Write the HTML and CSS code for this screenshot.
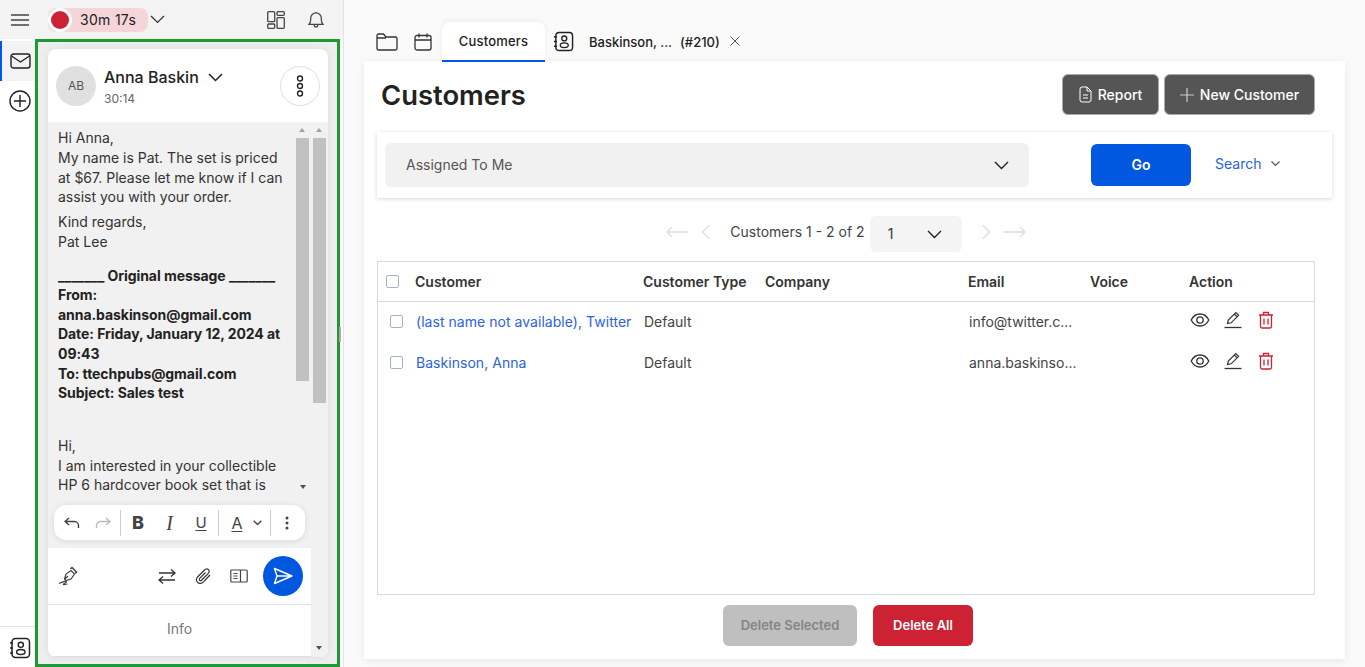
FILE: index.html
```html
<!DOCTYPE html>
<html lang="en">
  <head>
    <meta charset="UTF-8" />
    <meta name="viewport" content="width=device-width, initial-scale=1.0" />
    <title>Customers</title>
    <link rel="stylesheet" href="styles.css">
  </head>
  <body>
    <!-- shared icons -->
    <svg class="defs" width="0" height="0">
      <symbol id="i-book" viewBox="0 0 22 22">
        <rect x="3" y="1.5" width="17.5" height="19" rx="3.5" fill="none" stroke="currentColor" stroke-width="1.5"/>
        <path d="M1 6h3M1 11h3M1 16h3" stroke="currentColor" stroke-width="1.5"/>
        <circle cx="11.8" cy="7.8" r="2.6" fill="none" stroke="currentColor" stroke-width="1.4"/>
        <ellipse cx="11.8" cy="15" rx="4.2" ry="2.5" fill="none" stroke="currentColor" stroke-width="1.4"/>
      </symbol>
      <symbol id="i-eye" viewBox="0 0 20 16">
        <path d="M1.2 8C3.2 4 6.2 2 10 2s6.800 2 8.800 6c-2 4-5 6-8.800 6S3.200 12 1.200 8z" fill="none" stroke="currentColor" stroke-width="1.300"/>
        <circle cx="10" cy="8" r="3.200" fill="none" stroke="currentColor" stroke-width="1.300"/>
      </symbol>
      <symbol id="i-pen" viewBox="0 0 20 18">
        <path d="M4.500 12.500l.8-3.500 7.500-7.500 2.800 2.800-7.500 7.500-3.600.7zM11.300 3l2.800 2.800" fill="none" stroke="currentColor" stroke-width="1.200"/>
        <path d="M1.500 16.500h17" stroke="currentColor" stroke-width="1.300"/>
      </symbol>
      <symbol id="i-trash" viewBox="0 0 16 18">
        <path d="M1 4h14M5.500 4V1.500h5V4M2.500 4v11.500a1.500 1.500 0 0 0 1.500 1.500h8a1.500 1.500 0 0 0 1.500-1.500V4M6 7.500v6M10 7.500v6" fill="none" stroke="currentColor" stroke-width="1.300"/>
      </symbol>
    </svg>

    <div class="app">
      <!-- left panel -->
      <div class="left">
        <div class="topbar">
          <svg class="burger" width="18" height="12" viewBox="0 0 18 12"><path d="M0 1h18M0 6h18M0 11h18" stroke="#444" stroke-width="1.300"/></svg>
          <div class="timer">
            <span class="rec"><i></i></span>
            <span class="timer-text">30m 17s</span>
          </div>
          <svg class="timer-caret" width="15" height="9" viewBox="0 0 15 9"><path d="M1 1l6.500 6.500L14 1" fill="none" stroke="#333" stroke-width="1.200"/></svg>
          <svg class="layout-icon" width="18" height="18" viewBox="0 0 18 18"><g fill="none" stroke="#444" stroke-width="1.300"><rect x=".7" y=".7" width="7" height="10" rx="1"/><rect x=".7" y="13" width="7" height="4.300" rx="1"/><rect x="10" y=".7" width="7.300" height="3.600" rx="1"/><rect x="10" y="6.700" width="7.300" height="10.600" rx="1"/></g></svg>
          <svg class="bell-icon" width="16" height="18" viewBox="0 0 18 20"><path d="M1 15c1.500-1.500 2-2.500 2-5V8a6 6 0 0 1 12 0v2c0 2.500.5 3.500 2 5zM7 15.500c0 3 4 3 4 0M9 1v1" fill="none" stroke="#444" stroke-width="1.400"/></svg>
        </div>

        <div class="left-main">
          <div class="rail">
            <div class="rail-tab active">
              <svg width="21" height="16" viewBox="0 0 21 16"><rect x="1" y="1" width="19" height="14" rx="2.500" fill="none" stroke="#222" stroke-width="1.400"/><path d="M1.500 3l9 6 9-6" fill="none" stroke="#222" stroke-width="1.400"/></svg>
            </div>
            <div class="rail-tab">
              <svg width="22" height="22" viewBox="0 0 22 22"><circle cx="11" cy="11" r="10" fill="none" stroke="#222" stroke-width="1.400"/><path d="M11 5v12M5 11h12" stroke="#222" stroke-width="1.400"/></svg>
            </div>
            <div class="rail-foot">
              <svg width="22" height="22"><use href="#i-book"/></svg>
            </div>
          </div>

          <!-- conversation -->
          <div class="frame">
            <div class="card">
              <div class="card-head">
                <div class="avatar">AB</div>
                <div class="who">
                  <div class="who-name">Anna Baskin
                    <svg width="15" height="9" viewBox="0 0 15 9"><path d="M1 1l6.500 6.500L14 1" fill="none" stroke="#222" stroke-width="1.500"/></svg>
                  </div>
                  <div class="who-time">30:14</div>
                </div>
                <div class="more">
                  <svg width="8" height="24" viewBox="0 0 8 24"><g fill="none" stroke="#222" stroke-width="1.400"><circle cx="4" cy="4.500" r="2.500"/><circle cx="4" cy="12" r="2.500"/><circle cx="4" cy="19.500" r="2.500"/></g></svg>
                </div>
              </div>

              <div class="card-body">
                <div class="card-col">
                  <div class="message">
                    <div class="message-text">
                      <p>Hi Anna,<br>My name is Pat. The set is priced at $67. Please let me know if I can assist you with your order.</p>
                      <p class="kind">Kind regards,<br>Pat Lee</p>
                      <p class="orig"><b>_______ Original message _______<br>From:<br>anna.baskinson@gmail.com<br>Date: Friday, January 12, 2024 at 09:43<br>To: ttechpubs@gmail.com<br>Subject: Sales test</b></p>
                      <p class="hi">Hi,<br>I am interested in your collectible HP 6 hardcover book set that is</p>
                    </div>
                    <div class="scrollbar inner">
                      <span class="arrow-up"></span>
                      <div class="thumb"></div>
                      <span class="arrow-down"></span>
                    </div>
                  </div>

                  <div class="format-wrap">
                    <div class="format">
                      <svg class="f-undo" width="16" height="12" viewBox="0 0 16 12"><path d="M5 1L1 4.500 5 8M1 4.500h9a4.500 4 0 0 1 4.500 4V11" fill="none" stroke="#444" stroke-width="1.400"/></svg>
                      <svg class="f-redo" width="16" height="12" viewBox="0 0 16 12"><path d="M11 1l4 3.500L11 8M15 4.500H6a4.500 4 0 0 0-4.500 4V11" fill="none" stroke="#bbb" stroke-width="1.400"/></svg>
                      <span class="f-sep sep-a"></span>
                      <span class="f-btn f-b">B</span>
                      <span class="f-btn f-i">I</span>
                      <span class="f-btn f-u">U</span>
                      <span class="f-sep sep-b"></span>
                      <span class="f-btn f-a">A</span>
                      <svg class="f-caret" width="9" height="6" viewBox="0 0 9 6"><path d="M.7.700L4.500 4.500 8.300.700" fill="none" stroke="#444" stroke-width="1.300"/></svg>
                      <span class="f-sep sep-c"></span>
                      <svg class="f-dots" width="4" height="14" viewBox="0 0 4 14"><g fill="#444"><circle cx="2" cy="2" r="1.500"/><circle cx="2" cy="7" r="1.500"/><circle cx="2" cy="12" r="1.500"/></g></svg>
                    </div>
                  </div>

                  <div class="composer">
                    <svg class="c-sign" width="20" height="20" viewBox="0 0 20 20"><g fill="none" stroke="#444" stroke-width="1.200"><path d="M6.500 13l1.500-5 5-3.500 3.500 3.500-3.500 5-5 1.500zM6.500 13.500L10 10"/><path d="M12.500 3l1.500-1.500 4.500 4.500L17 7.500" stroke-width="1.500"/><path d="M1 17.500c3-1.500 7-3 7.500-2s-4 2.500-3 3 3-.5 4-.5"/></g></svg>
                    <svg class="c-swap" width="18" height="15" viewBox="0 0 18 15"><path d="M1 4h16M13 .500L17 4l-4 3.500M17 11H1M5 7.500L1 11l4 3.500" fill="none" stroke="#333" stroke-width="1.300"/></svg>
                    <svg class="c-clip" width="17" height="17" viewBox="0 0 17 17"><path d="M15 7l-6.500 6.800c-1.800 1.800-4.500 2-6 .5s-1.300-4 .5-5.800L9.500 2c1.200-1.200 3-1.400 4-.4s.8 2.800-.4 4L6.800 12c-.7.700-1.700.8-2.200.3s-.4-1.500.3-2.200L10.500 4.500" fill="none" stroke="#333" stroke-width="1.200"/></svg>
                    <svg class="c-book" width="18" height="14" viewBox="0 0 18 14"><g fill="none" stroke="#444" stroke-width="1.200"><rect x=".8" y="1" width="16.400" height="12" rx="1"/><path d="M10.500 1v12M3.500 4.500h4M3.500 7h4M3.500 9.500h4"/></g></svg>
                    <div class="send">
                      <svg width="20" height="18" viewBox="0 0 20 18"><path d="M1.500 1.500L19 9 1.500 16.500 4 9zM4 9h15" fill="none" stroke="#fff" stroke-width="1.400" stroke-linejoin="round"/></svg>
                    </div>
                  </div>
                  <div class="info">Info</div>
                </div>
                <div class="scrollbar outer">
                  <span class="arrow-up"></span>
                  <div class="thumb"></div>
                  <span class="arrow-down"></span>
                </div>
              </div>
            </div>
          </div>
        </div>
        <span class="handle"></span>
      </div>

      <!-- right panel -->
      <div class="right">
        <div class="tabs">
          <svg class="t-folder" width="22" height="18" viewBox="0 0 22 18"><path d="M1 15.500V2.500A1.500 1.500 0 0 1 2.500 1h5L10 4h9.500A1.500 1.500 0 0 1 21 5.500v10a1.500 1.500 0 0 1-1.500 1.500h-17A1.500 1.500 0 0 1 1 15.500zM1 5h9" fill="none" stroke="#333" stroke-width="1.300"/></svg>
          <svg class="t-cal" width="18" height="18" viewBox="0 0 18 18"><rect x="1" y="2.500" width="16" height="14.500" rx="2" fill="none" stroke="#333" stroke-width="1.300"/><path d="M1 7h16M5 .500v4M13 .500v4" stroke="#333" stroke-width="1.300"/></svg>
          <div class="tab active">Customers</div>
          <svg class="t-book" width="21" height="21"><use href="#i-book"/></svg>
          <div class="tab-name"><span>Baskinson, ...</span><span>(#210)</span></div>
          <svg class="t-close" width="10" height="10" viewBox="0 0 10 10"><path d="M.5.500l9 9M9.500.500l-9 9" stroke="#555" stroke-width="1"/></svg>
        </div>

        <div class="page">
          <div class="page-head">
            <h1>Customers</h1>
            <div class="page-actions">
              <button class="btn-dark btn-report">
                <svg width="13" height="17" viewBox="0 0 13 17"><path d="M1 3a2 2 0 0 1 2-2h5l4 4v9a2 2 0 0 1-2 2H3a2 2 0 0 1-2-2zM8 1v4h4M4 9h5M4 12h5" fill="none" stroke="#fff" stroke-width="1"/></svg>
                Report
              </button>
              <button class="btn-dark btn-new">
                <svg width="14" height="14" viewBox="0 0 14 14"><path d="M7 0v14M0 7h14" stroke="#ccc" stroke-width="1.200"/></svg>
                New Customer
              </button>
            </div>
          </div>

          <div class="filter">
            <div class="filter-select">
              <span>Assigned To Me</span>
              <svg width="15" height="9" viewBox="0 0 15 9"><path d="M1 1l6.500 6.500L14 1" fill="none" stroke="#222" stroke-width="1.400"/></svg>
            </div>
            <button class="btn-go">Go</button>
            <div class="search-link">Search
              <svg width="9" height="6" viewBox="0 0 9 6"><path d="M.5.500l4 4 4-4" fill="none" stroke="#555" stroke-width="1.200"/></svg>
            </div>
          </div>

          <div class="pager">
            <svg class="p-first" width="22" height="12" viewBox="0 0 22 12"><path d="M6 1L1 6l5 5M1 6h21" fill="none" stroke="#ddd" stroke-width="1.300"/></svg>
            <svg class="p-prev" width="9" height="14" viewBox="0 0 9 14"><path d="M8 .500L1.500 7 8 13.500" fill="none" stroke="#ddd" stroke-width="1.300"/></svg>
            <span class="p-text">Customers 1 - 2 of 2</span>
            <div class="p-select">
              <span>1</span>
              <svg width="15" height="9" viewBox="0 0 15 9"><path d="M1 1l6.500 6.500L14 1" fill="none" stroke="#222" stroke-width="1.400"/></svg>
            </div>
            <svg class="p-next" width="9" height="14" viewBox="0 0 9 14"><path d="M1 .500L7.500 7 1 13.500" fill="none" stroke="#ddd" stroke-width="1.300"/></svg>
            <svg class="p-last" width="22" height="12" viewBox="0 0 22 12"><path d="M16 1l5 5-5 5M21 6H0" fill="none" stroke="#ddd" stroke-width="1.300"/></svg>
          </div>

          <div class="table-box">
            <table class="grid">
              <colgroup>
                <col class="c1"><col class="c2"><col class="c3"><col class="c4"><col class="c5"><col class="c6"><col class="c7">
              </colgroup>
              <thead>
                <tr>
                  <th><span class="check head-check"></span></th>
                  <th>Customer</th>
                  <th>Customer Type</th>
                  <th>Company</th>
                  <th>Email</th>
                  <th>Voice</th>
                  <th>Action</th>
                </tr>
              </thead>
              <tbody>
                <tr>
                  <td><span class="check"></span></td>
                  <td><a>(last name not available), Twitter</a></td>
                  <td>Default</td>
                  <td></td>
                  <td>info@twitter.c...</td>
                  <td></td>
                  <td>
                    <div class="acts">
                      <svg class="a-eye" width="20" height="16"><use href="#i-eye"/></svg>
                      <svg class="a-pen" width="20" height="18"><use href="#i-pen"/></svg>
                      <svg class="a-trash" width="16" height="18"><use href="#i-trash"/></svg>
                    </div>
                  </td>
                </tr>
                <tr>
                  <td><span class="check"></span></td>
                  <td><a>Baskinson, Anna</a></td>
                  <td>Default</td>
                  <td></td>
                  <td>anna.baskinso...</td>
                  <td></td>
                  <td>
                    <div class="acts">
                      <svg class="a-eye" width="20" height="16"><use href="#i-eye"/></svg>
                      <svg class="a-pen" width="20" height="18"><use href="#i-pen"/></svg>
                      <svg class="a-trash" width="16" height="18"><use href="#i-trash"/></svg>
                    </div>
                  </td>
                </tr>
              </tbody>
            </table>
          </div>

          <div class="page-foot">
            <button class="btn-off">Delete Selected</button>
            <button class="btn-red">Delete All</button>
          </div>
        </div>
      </div>
    </div>
  </body>
</html>
```

FILE: styles.css
```css
/* reset */
* {
  margin: 0;
  padding: 0;
  box-sizing: border-box;
}

html,
body {
  height: 100%;
  overflow: hidden;
}

body {
  font-family: "Inter", "Liberation Sans", sans-serif;
  font-size: 14px;
  color: #333;
  background-color: #fafafa;
}

button {
  font-family: inherit;
  border: none;
}

.defs {
  position: absolute;
}

.app {
  display: flex;
  height: 667px;
}

/* left panel */
.left {
  position: relative;
  width: 344px;
  flex-shrink: 0;
  display: flex;
  flex-direction: column;
  background-color: #fff;
  border-right: 1px solid #e3e3e3;
}

.topbar {
  display: flex;
  align-items: center;
  height: 39px;
  flex-shrink: 0;
  background-color: #f3f3f3;
  padding-left: 11px;
}

.timer {
  display: flex;
  align-items: center;
  height: 24px;
  width: 100px;
  margin-left: 19px;
  background-color: #f6d5d9;
  border-radius: 8px;
}

.rec {
  display: flex;
  align-items: center;
  justify-content: center;
  width: 24px;
  height: 24px;
  border-radius: 50%;
  background-color: #fff;
}

.rec i {
  width: 18px;
  height: 18px;
  border-radius: 50%;
  background-color: #cc2233;
}

.timer-text {
  margin-left: 8px;
  font-size: 14px;
  letter-spacing: 0.3px;
  color: #222;
}

.timer-caret {
  margin-left: 2px;
}

.layout-icon {
  margin-left: 102px;
}

.bell-icon {
  margin-left: 23px;
}

.left-main {
  display: flex;
  flex: 1;
  min-height: 0;
}

.rail {
  width: 35px;
  flex-shrink: 0;
  display: flex;
  flex-direction: column;
  padding-top: 2px;
}

.rail-tab {
  display: flex;
  align-items: center;
  justify-content: center;
  height: 40px;
  padding-left: 4px;
}

.rail-tab.active {
  background-color: #f3f3f3;
  border-left: 2px solid #0057e0;
  padding-left: 3px;
}

.rail-foot {
  margin-top: auto;
  height: 41px;
  display: flex;
  justify-content: center;
  padding: 10px 0 0 5px;
  border-top: 1px solid #e3e3e3;
  color: #222;
}

/* conversation frame */
.frame {
  width: 305px;
  border: 3px solid #1f9a33;
  background-color: #eee;
  padding: 7px 9px 7px 10px;
}

.card {
  height: 100%;
  display: flex;
  flex-direction: column;
  background-color: #fff;
  border-radius: 8px;
  overflow: hidden;
  box-shadow: 0 0 8px rgba(0, 0, 0, 0.08);
}

.card-head {
  display: flex;
  align-items: center;
  height: 73px;
  flex-shrink: 0;
  padding: 0 8px;
}

.avatar {
  display: flex;
  align-items: center;
  justify-content: center;
  width: 40px;
  height: 40px;
  border-radius: 50%;
  background-color: #e0e0e0;
  color: #555;
  font-size: 12px;
}

.who {
  margin-left: 8px;
  flex: 1;
}

.who-name {
  font-size: 16px;
  font-weight: 500;
  line-height: 20px;
  color: #222;
  padding-top: 1px;
}

.who-name svg {
  margin-left: 5px;
  vertical-align: 1px;
}

.who-time {
  margin-top: 4px;
  font-size: 12px;
  color: #666;
}

.more {
  display: flex;
  align-items: center;
  justify-content: center;
  width: 40px;
  height: 40px;
  border-radius: 50%;
  border: 1px solid #e0e0e0;
}

.card-body {
  display: flex;
  flex: 1;
  min-height: 0;
}

.card-col {
  width: 263px;
  flex-shrink: 0;
  display: flex;
  flex-direction: column;
}

.message {
  display: flex;
  height: 383px;
  flex-shrink: 0;
  background-color: #f1f1f1;
  position: relative;
}

.message-text {
  width: 246px;
  padding: 6.4px 6px 0 10px;
  height: 372px;
  overflow: hidden;
  line-height: 19.6px;
  color: #333;
}

.kind {
  margin-top: 5.4px;
}

.orig {
  margin-top: 14.2px;
}

.hi {
  margin-top: 33.4px;
}

.orig b {
  font-weight: 700;
  letter-spacing: -0.06px;
  color: #222;
}

/* fake scrollbars, same look as the native ones */
.scrollbar {
  position: relative;
  width: 17px;
  flex-shrink: 0;
  background-color: #f1f1f1;
}

.thumb {
  position: absolute;
  left: 2px;
  top: 16px;
  width: 13px;
  background-color: #c1c1c1;
}

.inner .thumb {
  height: 243px;
}

.outer .thumb {
  height: 265px;
}

.arrow-up,
.arrow-down {
  position: absolute;
  left: 5px;
  width: 0;
  height: 0;
  border-left: 3.500px solid transparent;
  border-right: 3.500px solid transparent;
}

.arrow-up {
  top: 6px;
  border-bottom: 4px solid #a3a3a3;
}

.arrow-down {
  border-top: 4px solid #505050;
}

.inner .arrow-down {
  top: 363px;
  left: 6px;
}

.outer .arrow-down {
  bottom: 7px;
}

/* format toolbar */
.format-wrap {
  height: 45px;
  margin-top: -2px;
  position: relative;
  flex-shrink: 0;
  background-color: #f1f1f1;
  padding: 2px 0 0 6px;
}

.format {
  display: flex;
  align-items: center;
  width: 251px;
  height: 35px;
  background-color: #fff;
  border-radius: 12px;
  box-shadow: 0 1px 6px rgba(0, 0, 0, 0.1);
  padding-left: 10px;
  color: #444;
}

.f-redo {
  margin-left: 15px;
}

.f-sep {
  width: 1px;
  height: 26px;
  background-color: #ccc;
}

.sep-a {
  margin-left: 9px;
}

.sep-b {
  margin-left: 9px;
}

.sep-c {
  margin-left: 8px;
}

.f-btn {
  width: 16px;
  text-align: center;
  font-size: 16px;
  line-height: 20px;
}

.f-b {
  margin-left: 9px;
  font-weight: 800;
  font-size: 18px;
}

.f-i {
  margin-left: 15.5px;
  font-style: italic;
  font-family: "Liberation Serif", serif;
  font-size: 20px;
}

.f-u {
  margin-left: 15.5px;
  font-size: 15px;
  text-decoration: underline;
  text-underline-offset: 2px;
}

.f-a {
  margin-left: 10px;
  text-decoration: underline;
  text-underline-offset: 2px;
}

.f-caret {
  margin-left: 7.5px;
}

.f-dots {
  margin-left: 14px;
}

/* composer */
.composer {
  display: flex;
  align-items: center;
  height: 57px;
  flex-shrink: 0;
  background-color: #fff;
  border-bottom: 1px solid #dedede;
  padding: 0 8px 0 10px;
}

.c-swap {
  margin-left: 80px;
}

.c-clip {
  margin-left: 19px;
}

.c-book {
  margin-left: 18px;
}

.send {
  display: flex;
  align-items: center;
  justify-content: center;
  width: 40px;
  height: 40px;
  margin-left: 15px;
  border-radius: 50%;
  background-color: #0057e0;
}

.info {
  height: 52px;
  flex-shrink: 0;
  display: flex;
  align-items: center;
  justify-content: center;
  color: #777;
  font-size: 14px;
  padding-bottom: 4px;
  border-bottom: 1px solid #dedede;
}

.handle {
  position: absolute;
  left: 339px;
  top: 327px;
  width: 2px;
  height: 15px;
  background-color: #aaa;
}

/* right panel */
.right {
  flex: 1;
  min-width: 0;
  padding: 22px 20px 8px 20px;
  display: flex;
  flex-direction: column;
}

.tabs {
  display: flex;
  align-items: center;
  height: 39px;
  flex-shrink: 0;
  padding-left: 12px;
  color: #222;
}

.t-cal {
  margin-left: 16px;
}

.tab {
  position: relative;
  z-index: 1;
  height: 40px;
  width: 103px;
  margin-top: 1px;
  margin-left: 10px;
  display: flex;
  align-items: center;
  justify-content: center;
  background-color: #fff;
  border-radius: 8px 8px 0 0;
  border-bottom: 2px solid #0057e0;
  font-size: 13px;
  font-weight: 500;
  letter-spacing: 0.2px;
  box-shadow: 0 -2px 6px rgba(0, 0, 0, 0.05);
}

.t-book {
  margin-left: 8px;
}

.tab-name {
  display: flex;
  gap: 8px;
  margin-left: 15px;
  font-size: 13px;
  font-weight: 500;
}

.t-close {
  margin-left: 10px;
  margin-top: -2px;
}

.page {
  flex: 1;
  min-height: 0;
  background-color: #fff;
  box-shadow: 0 2px 8px rgba(0, 0, 0, 0.08);
  padding: 0 13px;
}

.page-head {
  display: flex;
  align-items: flex-start;
  justify-content: space-between;
  height: 71px;
  padding: 14px 17px 0 4px;
}

.page-head h1 {
  margin-top: 1px;
  font-size: 27.4px;
  font-weight: 600;
  line-height: 38px;
  color: #222;
}

.page-actions {
  display: flex;
  gap: 5px;
  margin-top: -1px;
}

.btn-dark {
  display: flex;
  align-items: center;
  justify-content: center;
  gap: 6px;
  height: 41px;
  background-color: #555;
  border: 1px solid #aaa;
  border-radius: 6px;
  color: #fff;
  font-size: 14px;
  font-weight: 500;
}

.btn-report {
  width: 97px;
}

.btn-new {
  width: 151px;
}

.filter {
  display: flex;
  align-items: center;
  height: 66px;
  width: 955px;
  padding: 0 8px;
  background-color: #fff;
  box-shadow: 0 1px 4px rgba(40, 60, 90, 0.2);
}

.filter-select {
  display: flex;
  align-items: center;
  justify-content: space-between;
  width: 644px;
  height: 44px;
  padding: 0 20px 0 21px;
  background-color: #f1f1f1;
  border-radius: 6px;
  color: #555;
}

.filter-select span {
  margin-bottom: 2px;
}

.btn-go {
  width: 100px;
  height: 42px;
  margin-left: 62px;
  padding-bottom: 2px;
  background-color: #0057e0;
  border-radius: 6px;
  color: #fff;
  font-size: 14px;
  font-weight: 600;
}

.search-link {
  margin-left: 24px;
  margin-bottom: 3px;
  color: #2a62d8;
}

.search-link svg {
  margin-left: 6px;
  vertical-align: 2px;
}

.pager {
  display: flex;
  align-items: center;
  justify-content: center;
  height: 36px;
  margin-top: 18px;
  width: 938px;
  color: #444;
}

.p-first,
.p-prev,
.p-next,
.p-last {
  margin-bottom: 4px;
}

.p-text {
  margin-bottom: 6px;
}

.p-prev {
  margin-left: 13px;
}

.p-text {
  margin-left: 20px;
}

.p-select {
  display: flex;
  align-items: center;
  justify-content: space-between;
  width: 92px;
  height: 36px;
  margin-left: 5px;
  padding: 0 20px 0 18px;
  background-color: #f4f4f4;
  border-radius: 6px;
  color: #333;
}

.p-select span {
  margin-bottom: 2px;
}

.p-next {
  margin-left: 20px;
}

.p-last {
  margin-left: 13px;
}

.table-box {
  width: 938px;
  height: 334px;
  margin-top: 9px;
  border: 1px solid #d3dae5;
}

.grid {
  width: 100%;
  table-layout: fixed;
  border-collapse: collapse;
}

.c1 { width: 37px; }
.c2 { width: 228px; }
.c3 { width: 122px; }
.c4 { width: 203px; }
.c5 { width: 122px; }
.c6 { width: 99px; }
.c7 { width: 125px; }

.grid th {
  height: 39px;
  text-align: left;
  font-weight: 600;
  color: #333;
  border-bottom: 1px solid #d3dae5;
}

.grid td {
  height: 41px;
  padding-left: 1px;
  color: #444;
  white-space: nowrap;
}

.grid a {
  color: #2d62dc;
  letter-spacing: 0.04px;
}

.check {
  display: block;
  width: 13px;
  height: 13px;
  margin-left: 11px;
  border: 1px solid #9fb3d1;
  border-radius: 2px;
  background-color: #fff;
}

.head-check {
  margin-left: 8px;
}

.acts {
  display: flex;
  align-items: center;
  margin-top: -4px;
  color: #333;
}

.a-pen {
  margin-left: 13px;
}

.a-trash {
  margin-left: 15px;
  color: #cc2233;
}

.page-foot {
  display: flex;
  justify-content: center;
  gap: 16px;
  width: 942px;
  margin-top: 10px;
}

.btn-off,
.btn-red {
  height: 41px;
  padding-bottom: 2px;
  border-radius: 6px;
  font-size: 13px;
  font-weight: 600;
}

.btn-off {
  width: 134px;
  background-color: #bfbfbf;
  color: #858585;
}

.btn-red {
  width: 100px;
  background-color: #cc2233;
  color: #fff;
}
```
